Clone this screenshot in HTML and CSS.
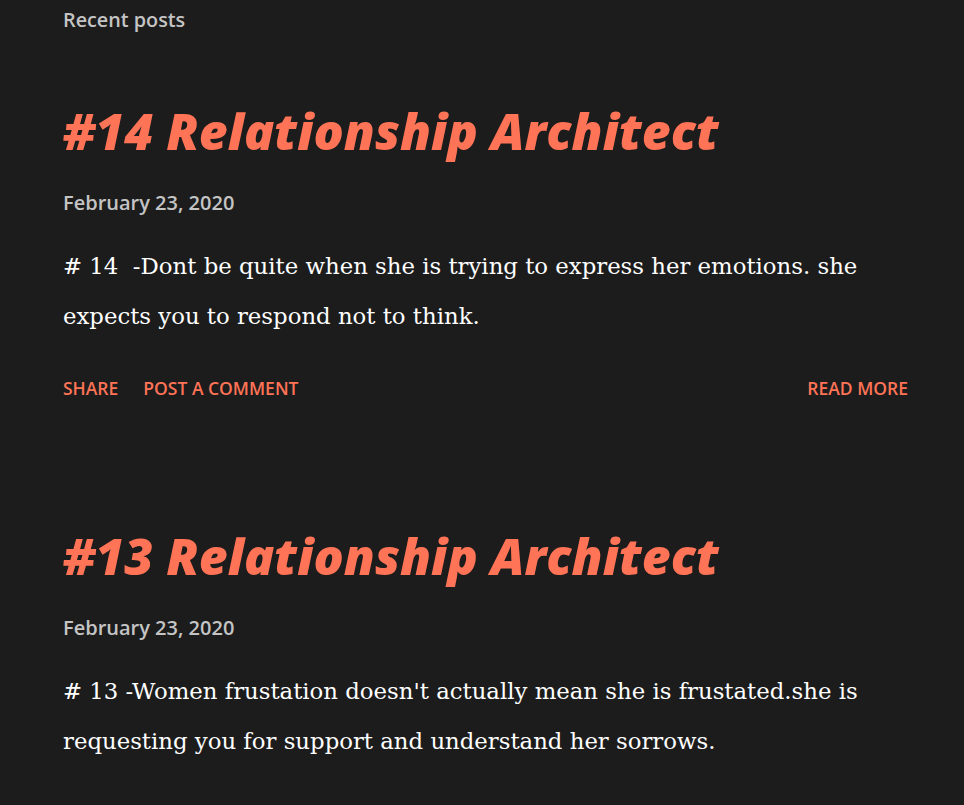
FILE: index.html
```html
<!DOCTYPE html>
<html>
<head>
<meta charset="utf-8">
<link rel="stylesheet" href="styles.css">
</head>
<body>
<main class="main">
  <h3 class="section-title">Recent posts</h3>
  <article class="post">
    <h2 class="post-title">#14 Relationship Architect</h2>
    <div class="post-date">February 23, 2020</div>
    <p class="post-snippet"># 14&nbsp; -Dont be quite when she is trying to express her emotions. she expects you to respond not to think.</p>
    <div class="post-footer">
      <div class="actions">
        <a class="action">Share</a>
        <a class="action">Post a Comment</a>
      </div>
      <a class="action">Read more</a>
    </div>
  </article>
  <article class="post">
    <h2 class="post-title">#13 Relationship Architect</h2>
    <div class="post-date">February 23, 2020</div>
    <p class="post-snippet"># 13 -Women frustation doesn't actually mean she is frustated.she is requesting you for support and understand her sorrows.</p>
  </article>
</main>
</body>
</html>
```
FILE: styles.css
```css
html, body {
  margin: 0;
  padding: 0;
  background: #1c1c1c;
}
.main {
  padding: 6px 56px 0 63px;
}
.section-title {
  margin: 0;
  font-family: "Open Sans", sans-serif;
  font-weight: 600;
  font-size: 19.8px;
  color: #c4c4c4;
  line-height: 28px;
}
.post {
  margin-top: 67px;
}
.post + .post {
  margin-top: 126px;
}
.post-title {
  margin: 0;
  font-family: "Open Sans", sans-serif;
  font-style: italic;
  font-weight: 800;
  font-size: 50px;
  line-height: 60px;
  color: #ff7356;
}
.post-date {
  margin-top: 30px;
  font-family: "Open Sans", sans-serif;
  font-weight: 600;
  font-size: 20px;
  color: #c4c4c4;
  line-height: 24px;
}
.post-snippet {
  margin: 26px 0 0;
  font-family: "DejaVu Serif", serif;
  font-size: 22.8px;
  line-height: 50px;
  color: #ffffff;
}
.post-footer {
  margin-top: 35px;
  display: flex;
  justify-content: space-between;
  align-items: center;
}
.actions {
  display: flex;
  gap: 25px;
}
.action {
  font-family: "Open Sans", sans-serif;
  font-weight: 600;
  font-size: 17.5px;
  text-transform: uppercase;
  color: #ff7356;
  line-height: 24px;
}
```
